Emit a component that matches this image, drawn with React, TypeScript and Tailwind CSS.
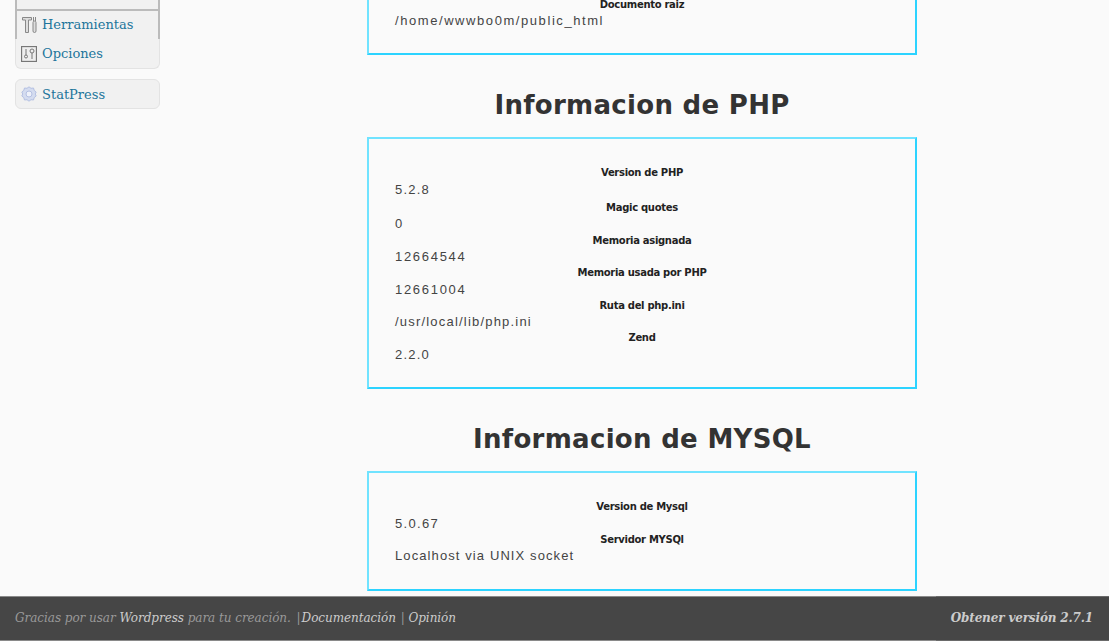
import React from "react";

const serif = "font-['DejaVu_Serif','Liberation_Serif',serif]";
const sans = "font-['DejaVu_Sans','Liberation_Sans',sans-serif]";
const labelCls = `pt-[1px] text-center text-[10px] leading-[12px] font-bold text-[#222] ${sans} tracking-[-0.3px]`;
const valueCls = "pl-[26px] text-[13px] leading-[16px] text-[#444] font-['Liberation_Sans',sans-serif]";

function Row({ label, value, h, g, t }: { label: string; value: string; h: string; g: string; t: string }) {
  return (
    <div className={`flex flex-col ${h}`}>
      <div className={labelCls}>{label}</div>
      <div className={`${g} ${t} ${valueCls}`}>{value}</div>
    </div>
  );
}

function ToolsIcon() {
  return (
    <svg width="16" height="18" viewBox="0 0 16 18" fill="#ddd" stroke="#888" strokeWidth="1">
      <path d="M.5 1.500h9v2.500h-3v12.500h-3V4H.5z" />
      <path d="M11.500 1v4M13.500 1v4" />
      <rect x="11" y="5" width="3" height="11.500" rx="1.500" />
    </svg>
  );
}

function OptionsIcon() {
  return (
    <svg width="16" height="16" viewBox="0 0 16 16" fill="#eee" stroke="#777" strokeWidth="1">
      <rect x="0.500" y="0.500" width="15" height="15" strokeWidth="1.300" />
      <circle cx="5" cy="10.500" r="1.500" fill="none" />
      <path d="M5 3v6M11 7v6" />
      <circle cx="11" cy="5" r="2" fill="none" />
    </svg>
  );
}

function StatIcon() {
  return (
    <svg width="16" height="16" viewBox="0 0 16 16" fill="#d4dcf0" stroke="#b4c0e2" strokeWidth="1">
      <path d="M8 .8l2 1.500 2.500-.3.700 2.400 2 1.600-1 2 1 2-2 1.600-.7 2.400-2.500-.3-2 1.500-2-1.500-2.500.3-.7-2.400-2-1.600 1-2-1-2 2-1.600.7-2.400 2.500.3z" />
      <circle cx="8" cy="8" r="3" fill="#eef1fa" />
    </svg>
  );
}

const boxCls = "border-2 border-[#70e3ff] border-r-[#2cd3ff] border-b-[#2cd3ff]";

export default function App() {
  return (
    <div className="flex h-[641px] w-full flex-col overflow-hidden bg-[#fafafa]">
      <div className="flex min-h-0 flex-1 items-start">
        <nav className={`ml-[15px] mt-[-18px] flex w-[145px] flex-col text-[13px] text-[#21759b] ${serif}`}>
          <div className="flex h-[29px] items-end overflow-hidden border-x-2 border-b-2 border-[#bbb] bg-[#f1f1f1] pl-[5px]">
            <svg width="16" height="24" viewBox="0 0 16 24" fill="#ddd" stroke="#888" strokeWidth="1" className="mb-[6px] shrink-0">
              <circle cx="8" cy="14" r="6.500" />
            </svg>
          </div>
          <div className="flex h-[28px] items-center gap-[4px] border-x-2 border-[#bbb] bg-[#f1f1f1] pl-[5px]">
            <ToolsIcon />
            <span>Herramientas</span>
          </div>
          <div className="flex h-[30px] items-center gap-[5px] rounded-b-[6px] border-x border-b border-[#e3e3e3] bg-[#f1f1f1] pl-[5px]">
            <OptionsIcon />
            <span>Opciones</span>
          </div>
          <div className="mt-[10px] flex h-[30px] items-center gap-[5px] rounded-[6px] border border-[#e3e3e3] bg-[#f1f1f1] pl-[5px]">
            <StatIcon />
            <span className="pt-[1px]">StatPress</span>
          </div>
        </nav>

        <main className="ml-[207px] flex w-[550px] flex-col items-stretch">
          <section className={`mt-[-4px] h-[59px] ${boxCls}`}>
            <div className={labelCls}>Documento raiz</div>
            <div className={`mt-[2px] tracking-[1.57px] ${valueCls}`}>/home/wwwbo0m/public_html</div>
          </section>

          <h2 className={`mt-[34px] mb-[15px] text-center text-[26px] tracking-[0.3px] leading-[33px] font-bold text-[#333] ${sans}`}>Informacion de PHP</h2>

          <section className={`flex h-[252px] flex-col pt-[27px] ${boxCls}`}>
            <Row label="Version de PHP" value="5.2.8" h="h-[35px]" g="mt-[3px]" t="tracking-[1.2px]" />
            <Row label="Magic quotes" value="0" h="h-[33px]" g="mt-[2px]" t="tracking-[1.6px]" />
            <Row label="Memoria asignada" value="12664544" h="h-[32px]" g="mt-[2px]" t="tracking-[1.7px]" />
            <Row label="Memoria usada por PHP" value="12661004" h="h-[33px]" g="mt-[3px]" t="tracking-[1.7px]" />
            <Row label="Ruta del php.ini" value="/usr/local/lib/php.ini" h="h-[32px]" g="mt-[2px]" t="tracking-[1.2px]" />
            <Row label="Zend" value="2.2.0" h="h-[33px]" g="mt-[3px]" t="tracking-[1.2px]" />
          </section>

          <h2 className={`mt-[34px] mb-[15px] text-center text-[26px] tracking-[0.3px] leading-[33px] font-bold text-[#333] ${sans}`}>Informacion de MYSQL</h2>

          <section className={`flex h-[120px] flex-col pt-[27px] ${boxCls}`}>
            <Row label="Version de Mysql" value="5.0.67" h="h-[33px]" g="mt-[3px]" t="tracking-[1.3px]" />
            <Row label="Servidor MYSQl" value="Localhost via UNIX socket" h="h-[33px]" g="mt-[2px]" t="tracking-[1.1px]" />
          </section>
        </main>
      </div>

      <footer className={`flex h-[45px] shrink-0 italic ${serif}`}>
        <div className="flex flex-1 items-center border-y border-y-[#8a8a8a] bg-[#464646] pb-[2px] pl-[15px]">
          <p className="text-[12px] tracking-[-0.05px] text-[#999]">
            Gracias por usar <span className="text-[#ccc]">Wordpress</span> para tu creación. <span className="ml-[2px]">|</span><span className="ml-[1px] text-[#ccc]">Documentación</span> <span className="ml-[1px]">|</span> <span className="text-[#ccc]">Opinión</span>
          </p>
        </div>
        <div className="flex w-[173px] items-center justify-end border-y border-y-[#6a6a6a] bg-[#464646] pb-[2px] pr-[16px]">
          <p className="text-[12px] tracking-[-0.15px] font-bold text-[#ccc]">Obtener versión 2.7.1</p>
        </div>
      </footer>
    </div>
  );
}
